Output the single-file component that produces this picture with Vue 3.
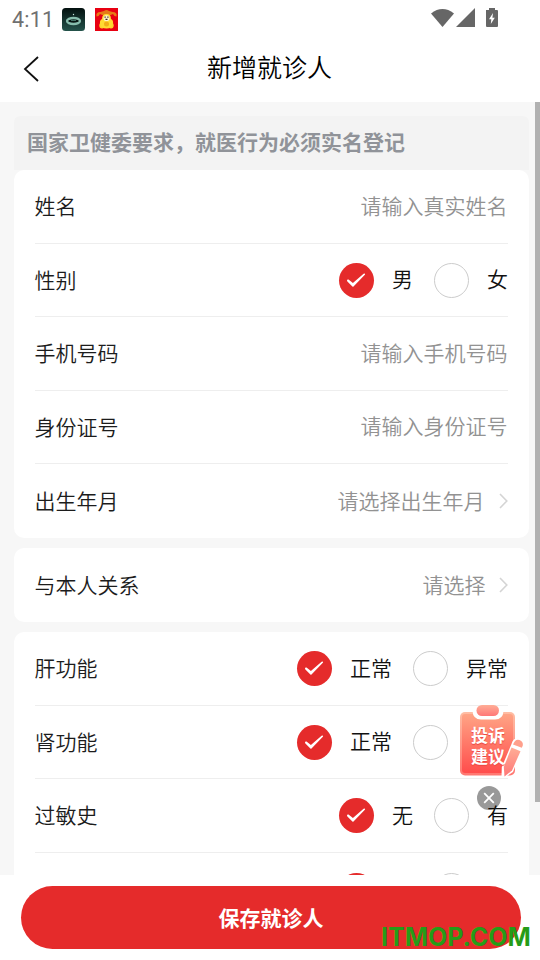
<script setup>
const basics = [
  { label: '姓名', placeholder: '请输入真实姓名' },
  { label: '性别', options: ['男', '女'] },
  { label: '手机号码', placeholder: '请输入手机号码' },
  { label: '身份证号', placeholder: '请输入身份证号' },
  { label: '出生年月', placeholder: '请选择出生年月', picker: true },
]
const relation = [{ label: '与本人关系', placeholder: '请选择', picker: true, tight: true }]
const health = [
  { label: '肝功能', options: ['正常', '异常'] },
  { label: '肾功能', options: ['正常', '异常'], covered: true },
  { label: '过敏史', options: ['无', '有'] },
  { label: '', options: ['', ''] },
]
const cards = [basics, relation, health]
</script>

<template>
  <div class="screen">
    <header class="status">
      <span class="clock">4:11</span>
      <svg class="app-icon" viewBox="0 0 23 23">
        <defs>
          <linearGradient id="pond" x1="0" y1="0" x2="0" y2="1">
            <stop offset="0" stop-color="#03100f" />
            <stop offset="1" stop-color="#24534b" />
          </linearGradient>
        </defs>
        <rect width="23" height="23" rx="3.5" fill="url(#pond)" />
        <ellipse cx="11.5" cy="13" rx="6.5" ry="3" fill="#061512" stroke="#86bdad" stroke-width="2.3" />
        <path d="M9 12.3h5" stroke="#52887b" stroke-width="1" />
        <circle cx="11.5" cy="6.5" r=".7" fill="#c6e4db" />
      </svg>
      <svg class="app-icon second" viewBox="0 0 23 23">
        <rect width="23" height="23" fill="#e80012" />
        <path d="M1.5 8.500Q.5 4 5.500 4L9 3Q11.500 1 14 3l3.500 1q5 0 4 4.500l-2-.5-1.500-2-3.500 1.500H8.500L5 6 3.500 8z" fill="#e77a16" />
        <ellipse cx="7" cy="17.400" rx="2.700" ry="3" fill="#ffd12e" />
        <ellipse cx="16" cy="17.400" rx="2.700" ry="3" fill="#ffd12e" />
        <path d="M7 11Q7 6 11.500 6T16 11q2.500 1 2 4.500Q17 20.500 11.500 20.500T5 15.500Q4.500 12 7 11z" fill="#ffda32" />
        <ellipse cx="11.500" cy="10.200" rx="3" ry="3" fill="#fff2ce" />
        <path d="M9.500 9.200h1.200M12.300 9.200h1.200M10.500 11.300h2" stroke="#35251d" stroke-width="1.300" />
        <circle cx="11.500" cy="16" r="2.500" fill="#f3ad18" />
      </svg>
      <svg class="signals" viewBox="0 0 70 22">
        <g fill="#666">
          <path d="M0 5.400Q11.500-3.400 23 5.400L11.500 19z" />
          <path d="M25 19L44 0v19z" />
          <path d="M55 2h3V0h6v2h2q1 0 1 1v15q0 1-1 1H56q-1 0-1-1z" />
        </g>
        <path d="M62 5l-4 6.200h2.300L59.800 16l4-6.200h-2.400z" fill="#fff" />
      </svg>
    </header>

    <nav class="navbar">
      <svg class="back" viewBox="0 0 16 26"><path d="M15 1L2 13l13 12" /></svg>
      <h1>新增就诊人</h1>
    </nav>

    <main class="content">
      <p class="notice">国家卫健委要求，就医行为必须实名登记</p>
      <section v-for="(card, c) in cards" :key="c" class="card">
        <div v-for="row in card" :key="row.label" class="row">
          <span class="label">{{ row.label }}</span>
          <div v-if="row.options" class="options">
            <div v-for="(option, i) in row.options" :key="i" class="option">
              <span class="radio" :class="{ checked: i === 0 }">
                <svg v-if="i === 0" viewBox="0 0 35 35">
                  <path d="M8 17.400q.2-1.400 1.500-.8l4.400 3.500 10.700-9.300q1.500-.7 1.500.6L14.500 23.500q-.6.500-1.100-.1l-5-4.800q-.4-.6-.4-1.200z" />
                </svg>
              </span>
              <span class="option-text" :class="{ hidden: row.covered && i === 1 }">{{ option }}</span>
            </div>
          </div>
          <div v-else class="value" :class="{ tight: row.tight }">
            <span>{{ row.placeholder }}</span>
            <svg v-if="row.picker" class="chevron" viewBox="0 0 9 16"><path d="M1 1l6.800 7L1 15" /></svg>
          </div>
        </div>
      </section>
      <i class="scrollbar"></i>
    </main>

    <footer class="footer">
      <button class="save">保存就诊人</button>
    </footer>

    <aside class="feedback">
      <svg class="clipboard" viewBox="0 0 66 74">
        <defs>
          <linearGradient id="board" x1="0" y1="0" x2="0" y2="1">
            <stop offset="0" stop-color="#ffa485" />
            <stop offset="1" stop-color="#ff4d4c" />
          </linearGradient>
          <linearGradient id="edge" x1="0" y1="0" x2="0" y2="1">
            <stop offset="0" stop-color="#ffbda3" />
            <stop offset="1" stop-color="#ff7771" />
          </linearGradient>
          <linearGradient id="clip" x1="0" y1="0" x2="0" y2="1">
            <stop offset="0" stop-color="#ffad96" />
            <stop offset="1" stop-color="#ff7777" />
          </linearGradient>
        </defs>
        <rect x="1" y="8" width="55" height="63.500" rx="5" fill="url(#edge)" />
        <rect x="3" y="10" width="51" height="59" rx="3" fill="url(#board)" />
        <path d="M13.500 7h31q-.5 8.500-8.500 8.500H22Q14 15.500 13.500 7z" fill="#fff" />
        <rect x="17.500" y="1" width="22.500" height="11" rx="5.500" fill="url(#clip)" />
        <path d="M52.500 40Q54.500 33 60.500 35T64 41.500L54 68 45 74l-2.500-1 .3-10z" fill="#fff" />
        <path d="M54.500 39.500Q56.500 34.500 60.500 36T63.800 41.500L62.800 43.700 54 40.500z" fill="#ffa08c" />
        <path d="M52.500 43.500L61.500 47.300 53 66.500 45.500 72.500 44.800 63z" fill="url(#clip)" />
      </svg>
      <div class="feedback-text"><span>投诉</span><span>建议</span></div>
    </aside>
    <svg class="close" viewBox="0 0 24 24">
      <circle cx="12" cy="12" r="12" />
      <path d="M7.200 7.200l9.600 9.600M16.800 7.200l-9.600 9.600" />
    </svg>
    <span class="watermark">ITMOP.COM</span>
  </div>
</template>

<style>
body { margin: 0; overflow: hidden; background: #fff; }
</style>

<style scoped>
* { box-sizing: border-box; }
.screen {
  position: relative;
  width: 540px;
  height: 960px;
  display: flex;
  flex-direction: column;
  overflow: hidden;
  background: #fff;
  color: #1c1c1c;
  font-family: "Noto Sans CJK SC", sans-serif;
  font-size: 21px;
  font-weight: 350;
}
.status { height: 38px; flex: none; display: flex; align-items: center; padding: 0 39px 0 12px; }
.clock { width: 50px; padding-top: 1px; font: 400 21.5px/38px Roboto, sans-serif; letter-spacing: .2px; color: #707070; }
.app-icon { width: 23px; height: 23px; }
.second { margin-left: 10px; }
.signals { width: 70px; height: 22px; margin-left: auto; }
.navbar { height: 64px; flex: none; display: flex; align-items: center; padding: 0 40px 2px 23px; }
.back { width: 16px; height: 26px; fill: none; stroke: #111; stroke-width: 1.8; }
h1 { flex: 1; margin: 0; padding-bottom: 5px; text-align: center; font-size: 25px; font-weight: 350; line-height: 57px; color: #000; }
.content { position: relative; height: 773px; flex: none; overflow: hidden; padding: 14px 11px 0 14px; background: #f7f7f7; }
.notice { height: 54px; margin: 0; padding-left: 13px; border-radius: 6px 6px 0 0; background: #f3f3f3; color: #909399; font-weight: 700; line-height: 51px; }
.card { margin-bottom: 10px; padding: 0 21px; border-radius: 10px; background: #fff; }
.row { height: 73.5px; display: flex; align-items: center; justify-content: space-between; border-bottom: 1px solid #eee; }
.row:last-child { height: 74px; border-bottom: 0; }
.label { line-height: 30px; padding-bottom: 2px; margin-left: -.5px; }
.options { display: flex; gap: 21px; padding-top: 1px; }
.option { display: flex; align-items: center; gap: 18px; }
.radio { width: 35px; height: 35px; border: 1px solid #ccc; border-radius: 50%; }
.radio.checked { border: 0; background: #e52b2b; }
.radio svg { display: block; width: 35px; height: 35px; fill: #fff; }
.option-text { min-width: 21px; line-height: 31px; padding-bottom: 3px; color: #111; }
.hidden { visibility: hidden; }
.value { display: flex; align-items: center; gap: 14px; color: #929292; line-height: 30px; }
.value span { padding-bottom: 3px; margin-left: -.5px; margin-right: .5px; }
.value.tight { gap: 13px; }
.chevron { width: 9px; height: 16px; fill: none; stroke: #d4d4d4; stroke-width: 1.6; }
.scrollbar { position: absolute; top: 0; right: 0; width: 5px; height: 700px; background: #b1b1b1; }
.footer { flex: 1; padding: 11px 19px 0 21px; background: #fff; }
.save { display: block; width: 500px; height: 63px; padding: 0 0 2px; border: 0; border-radius: 32px; background: #e52b2b; color: #fff; font: 700 21px/60px "Noto Sans CJK SC", sans-serif; }
.feedback { position: absolute; left: 459px; top: 704px; width: 66px; height: 74px; }
.clipboard { position: absolute; inset: 0; width: 66px; height: 74px; }
.feedback-text { position: absolute; left: 12px; top: 20px; display: flex; flex-direction: column; color: #fff; font-size: 17px; font-weight: 700; line-height: 21px; text-shadow: 0 1px 1px #e8443f; }
.close { position: absolute; left: 477px; top: 786px; width: 24px; height: 24px; }
.close circle { fill: rgba(0, 0, 0, .4); }
.close path { stroke: #fff; stroke-width: 1.8; fill: none; }
.watermark { position: absolute; left: 381px; top: 919px; color: #269c17; font: 650 25px/36px Inter, sans-serif; }
</style>
